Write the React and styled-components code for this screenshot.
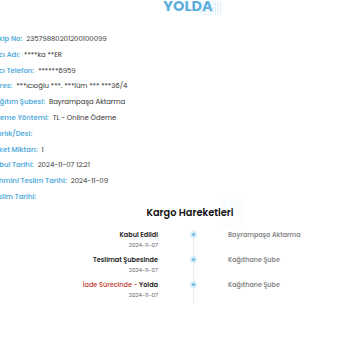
import React from "react";
import styled, { createGlobalStyle } from "styled-components";

const Global = createGlobalStyle`
  html, body { margin: 0; padding: 0; background: #fff; overflow: hidden; }
  body { font-family: "Poppins", "Open Sans", "Noto Sans", sans-serif; }
`;

const Page = styled.div`
  width: 396px;
  margin-left: -10px;
  position: relative;
`;

const Title = styled.h1`
  margin: -1px 0 0;
  text-align: center;
  font-size: 14.5px;
  line-height: 14.5px;
  font-weight: 700;
  color: #5aaedc;
`;

const Dots = styled.svg`
  position: absolute;
  left: ${(p) => p.$x}px;
  top: ${(p) => p.$y}px;
  pointer-events: none;
`;

const InfoList = styled.dl`
  margin: 17.5px 0 0;
  display: flex;
  flex-direction: column;
`;

const Row = styled.div`
  display: flex;
  gap: 4px;
  font-size: 6.9px;
  line-height: 15.8px;
  white-space: nowrap;
`;

const Label = styled.dt`
  margin: 0;
  color: #5aaedc;
  font-weight: 600;
`;

const Value = styled.dd`
  margin: 0;
  color: #333;
  font-weight: 400;
`;

const SectionTitle = styled.h2`
  margin: 0;
  text-align: center;
  font-size: 9.8px;
  line-height: 16px;
  font-weight: 600;
  color: #111;
  padding-left: 4px;
`;

const Timeline = styled.div`
  margin-top: 8px;
  display: grid;
  grid-template-columns: 168px 70px 1fr;
  position: relative;
`;

const Line = styled.div`
  grid-column: 2;
  grid-row: 1 / span 3;
  justify-self: center;
  width: 1px;
  background: #ececec;
  margin-bottom: -8px;
`;

const Left = styled.div`
  grid-column: 1;
  text-align: right;
  height: 25px;
`;

const Step = styled.div`
  font-size: 6.5px;
  line-height: 11px;
  font-weight: 600;
  color: #1a1a1a;
`;

const Red = styled.span`
  color: #c0392b;
  font-weight: 500;
`;

const DateText = styled.div`
  font-size: 5.5px;
  line-height: 10px;
  color: #666;
`;

const DotCell = styled.div`
  grid-column: 2;
  display: flex;
  justify-content: center;
  padding-top: 2px;
  z-index: 1;
`;

const Dot = styled.span`
  width: 7px;
  height: 7px;
  border-radius: 50%;
  background: #d4ecf8;
  display: flex;
  align-items: center;
  justify-content: center;
  &::after {
    content: "";
    width: 3px;
    height: 3px;
    border-radius: 50%;
    background: #6ab8e2;
  }
`;

const Right = styled.div`
  grid-column: 3;
  font-size: 6.4px;
  line-height: 11px;
  font-weight: 600;
  color: #8a8a8a;
`;

const info = [
  ["Takip No:", "23579880201200100099"],
  ["Alıcı Adı:", "****ka **ER"],
  ["Alıcı Telefon:", "******6959"],
  ["Adres:", "***ıcıoğlu ***. ***lüm *** ***36/4"],
  ["Dağıtım Şubesi:", "Bayrampaşa Aktarma"],
  ["Ödeme Yöntemi:", "TL - Online Ödeme"],
  ["Ağırlık/Desi:", ""],
  ["Paket Miktarı:", "1"],
  ["Kabul Tarihi:", "2024-11-07 12:21"],
  ["Tahmini Teslim Tarihi:", "2024-11-09"],
  ["Teslim Tarihi:", ""],
];

const steps = [
  { title: "Kabul Edildi", date: "2024-11-07", place: "Bayrampaşa Aktarma" },
  { title: "Teslimat Şubesinde", date: "2024-11-07", place: "Kağıthane Şube" },
  { title: "Yolda", red: "İade Sürecinde - ", date: "2024-11-07", place: "Kağıthane Şube" },
];

function DotGrid({ x, y, cols, rows, opacity }) {
  const items = [];
  for (let r = 0; r < rows; r++)
    for (let c = 0; c < cols; c++)
      items.push(<circle key={r + "-" + c} cx={c * 2.4 + 1} cy={r * 2.4 + 1} r={0.6} fill="#8ccbeb" opacity={opacity} />);
  return (
    <Dots $x={x} $y={y} width={cols * 2.4} height={rows * 2.4}>
      {items}
    </Dots>
  );
}

export default function App() {
  return (
    <>
      <Global />
      <Page>
        <DotGrid x={210} y={2} cols={9} rows={6} opacity={0.7} />
        <DotGrid x={231} y={198} cols={10} rows={12} opacity={0.15} />
        <Title>YOLDA</Title>
        <InfoList>
          {info.map(([l, v]) => (
            <Row key={l}>
              <Label>{l}</Label>
              <Value>{v}</Value>
            </Row>
          ))}
        </InfoList>
        <SectionTitle>Kargo Hareketleri</SectionTitle>
        <Timeline>
          <Line />
          {steps.map((s, i) => (
            <React.Fragment key={i}>
              <Left style={{ gridRow: i + 1 }}>
                <Step>
                  {s.red && <Red>{s.red}</Red>}
                  {s.title}
                </Step>
                <DateText>{s.date}</DateText>
              </Left>
              <DotCell style={{ gridRow: i + 1 }}>
                <Dot />
              </DotCell>
              <Right style={{ gridRow: i + 1 }}>{s.place}</Right>
            </React.Fragment>
          ))}
        </Timeline>
      </Page>
    </>
  );
}
